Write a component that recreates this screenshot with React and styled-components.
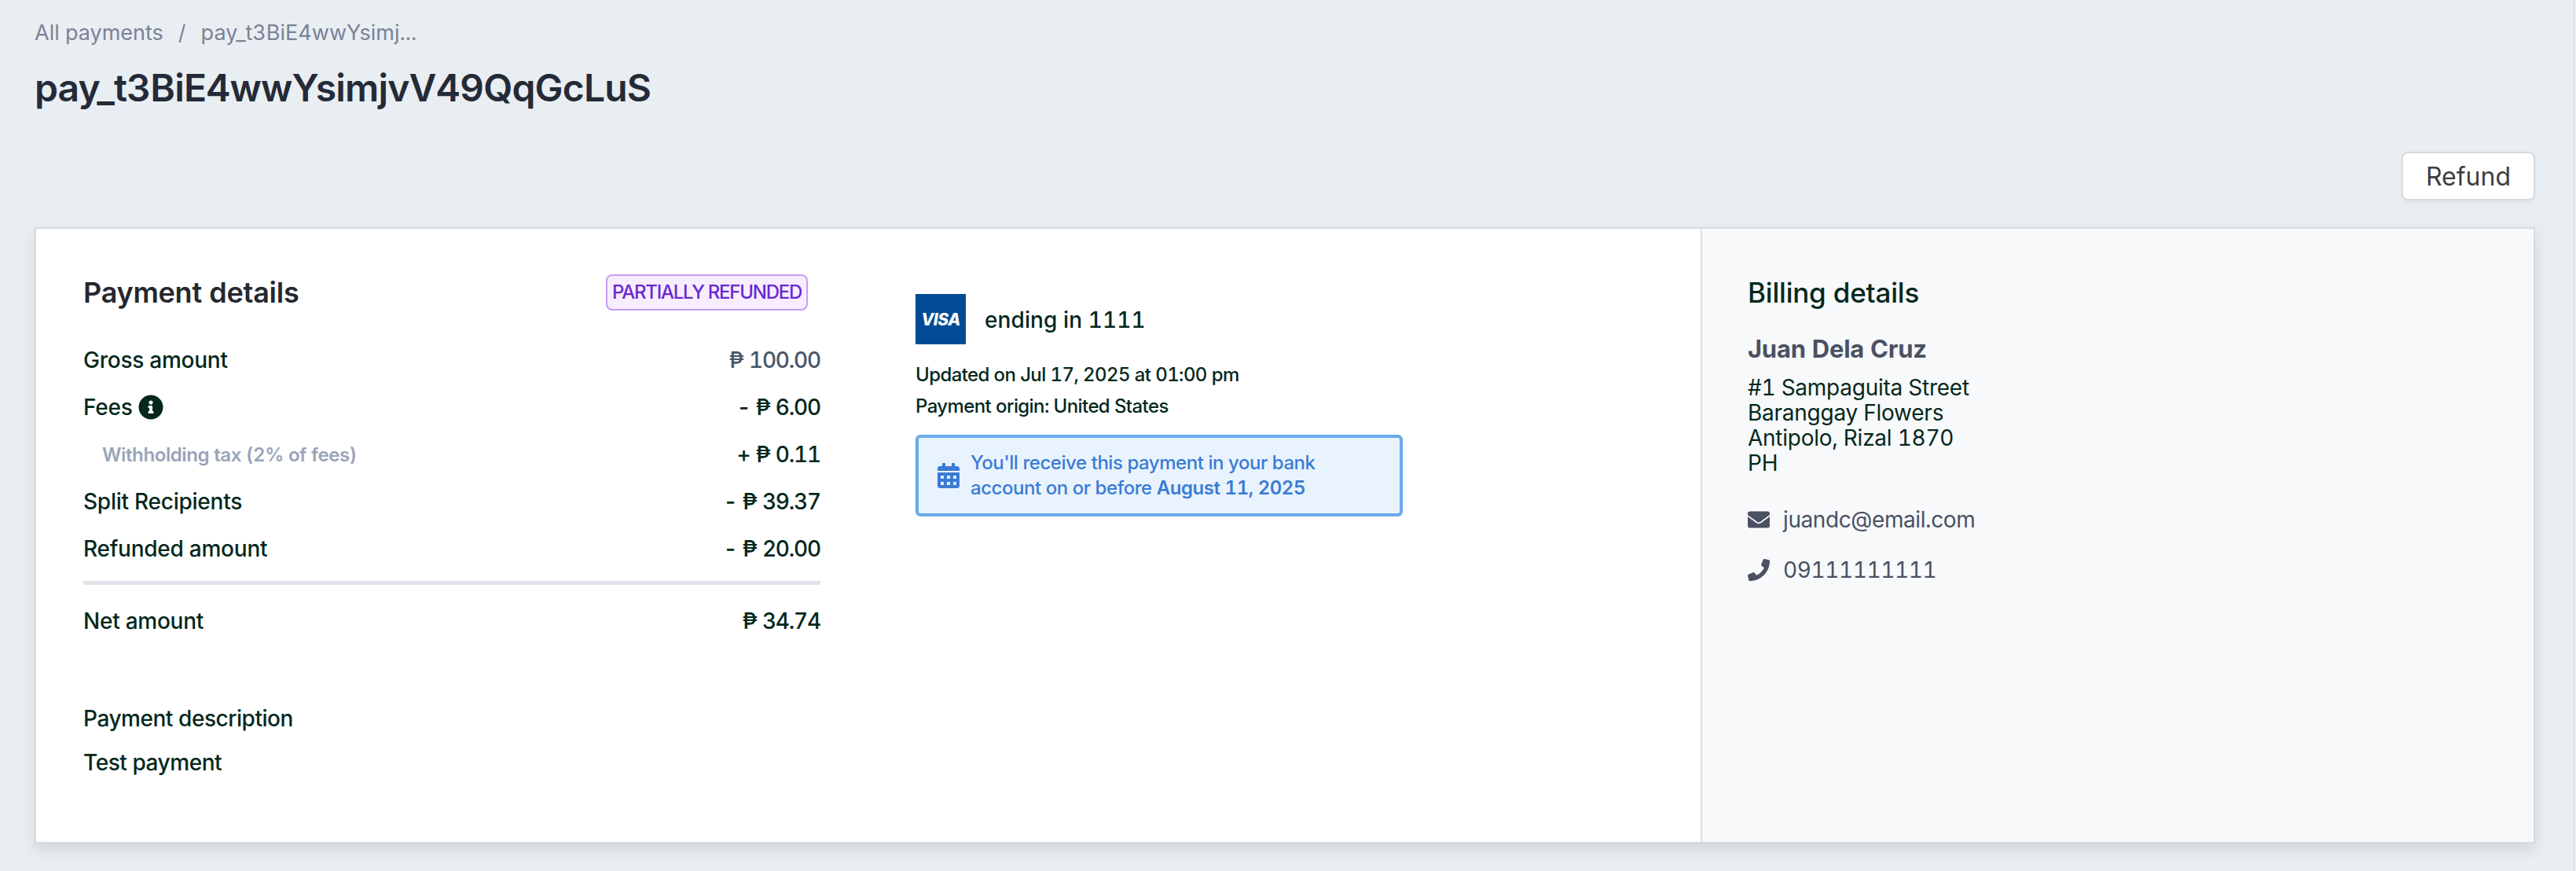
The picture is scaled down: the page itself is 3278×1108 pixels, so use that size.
import React from 'react';
import styled, { createGlobalStyle } from 'styled-components';
import { FaInfoCircle, FaCalendarAlt, FaEnvelope, FaPhone } from 'react-icons/fa';

const Global = createGlobalStyle`
	html, body {
		margin: 0;
		padding: 0;
		background: #e9eef2;
		font-family: Inter, "Noto Sans", sans-serif;
		font-variant-numeric: tabular-nums;
		color: #04281c;
	}
`;

const Page = styled.div`
	box-sizing: border-box;
	width: 3276px;
	height: 1108px;
	padding: 24px 48px 0 44px;
	overflow: hidden;
	border-right: 2px solid #e1e4e8;
`;

const Breadcrumb = styled.div`
	display: flex;
	gap: 19px;
	height: 36px;
	line-height: 36px;
	font-size: 27px;
	color: #7b8296;
`;

const Title = styled.h1`
	margin: 20px 0 0;
	height: 64px;
	line-height: 64px;
	font-size: 48px;
	font-weight: 600;
	letter-spacing: -0.8px;
	color: #252a37;
`;

const Actions = styled.div`
	display: flex;
	justify-content: flex-end;
	margin-top: 49px;
`;

const RefundButton = styled.button`
	box-sizing: border-box;
	width: 170px;
	height: 62px;
	background: #fff;
	border: 2px solid #d9dbdd;
	border-radius: 8px;
	box-shadow: 0 2px 6px rgba(0, 0, 0, 0.05);
	font-family: inherit;
	font-size: 32px;
	color: #3d3d3f;
`;

const Card = styled.div`
	box-sizing: border-box;
	display: flex;
	height: 784px;
	margin-top: 34px;
	border: 2px solid #d8dadc;
	background: #fff;
	box-shadow: 0 8px 16px rgba(40, 50, 60, 0.12);
`;

const MainPanel = styled.div`
	display: flex;
	flex: 0 0 2118px;
	box-sizing: border-box;
	padding: 58px 60px 0;
	gap: 121px;
`;

const SummaryColumn = styled.div`
	width: 938px;
`;

const SummaryHeader = styled.div`
	display: flex;
	align-items: center;
	justify-content: space-between;
	height: 46px;
	padding-right: 16px;
	margin-bottom: 33px;
`;

const SectionTitle = styled.h2`
	margin: 0;
	font-size: 36px;
	line-height: 46px;
	font-weight: 600;
	letter-spacing: -0.25px;
	color: #25282f;
`;

const StatusBadge = styled.span`
	box-sizing: border-box;
	height: 46px;
	line-height: 42px;
	padding: 0 6px;
	background: #f7edfe;
	border: 2px solid #c99cf2;
	border-radius: 8px;
	font-size: 24px;
	font-weight: 500;
	letter-spacing: -1.25px;
	color: #6a28d0;
`;

const Row = styled.div`
	display: flex;
	align-items: center;
	justify-content: space-between;
	height: 60px;
	font-size: 28px;
	font-weight: 500;
	letter-spacing: -0.25px;
`;

const RowLabel = styled.span`
	display: flex;
	align-items: center;
	gap: 8px;
	padding-left: ${(p) => (p.$sub ? '24px' : '0')};
	font-size: ${(p) => (p.$sub ? '24px' : '28px')};
	font-weight: ${(p) => (p.$sub ? 600 : 500)};
	letter-spacing: ${(p) => (p.$sub ? '-0.4px' : '-0.25px')};
	color: ${(p) => (p.$sub ? '#9aa3b8' : '#04281c')};
	svg {
		color: #04281c;
	}
`;

const RowValue = styled.span`
	letter-spacing: -1.2px;
	word-spacing: 1px;
	color: ${(p) => (p.$muted ? '#4a5568' : '#04281c')};
`;

const Rule = styled.div`
	height: 5px;
	margin: 11px 0 16px;
	background: #dfe2e8;
`;

const Description = styled.div`
	margin-top: 66px;
	font-size: 28px;
	font-weight: 500;
	letter-spacing: -0.45px;
	line-height: 56px;
`;

const MethodColumn = styled.div`
	width: 620px;
	padding-top: 25px;
`;

const CardRow = styled.div`
	display: flex;
	align-items: center;
	gap: 24px;
	height: 64px;
	font-size: 28px;
	font-weight: 500;
	letter-spacing: 0.1px;
`;

const CardLabel = styled.span`
	padding-top: 2px;
`;

const VisaLogo = styled.span`
	display: flex;
	align-items: center;
	justify-content: center;
	width: 64px;
	height: 64px;
	background: #004b93;
	color: #fff;
	font-size: 21px;
	font-weight: 800;
	font-style: italic;
	letter-spacing: -0.5px;
`;

const MetaList = styled.div`
	margin-top: 19px;
	font-size: 24px;
	font-weight: 500;
	line-height: 40px;
	letter-spacing: -0.6px;
`;

const PayoutNotice = styled.div`
	box-sizing: border-box;
	display: flex;
	align-items: center;
	gap: 12px;
	height: 104px;
	margin-top: 16px;
	padding: 0 22px;
	background: #e9f3fd;
	border: 4px solid #6aaaea;
	border-radius: 6px;
	font-size: 24px;
	font-weight: 500;
	line-height: 32px;
	letter-spacing: -0.45px;
	color: #3a7bd5;
	strong {
		font-weight: 600;
	}
`;

const BillingPanel = styled.div`
	flex: 1;
	padding: 58px 60px 0 58px;
	background: #f8f9fb;
	border-left: 2px solid #dfe1ec;
`;

const BillingTitle = styled.h2`
	margin: 0;
	font-size: 35px;
	line-height: 46px;
	font-weight: 500;
	letter-spacing: -0.2px;
`;

const CustomerName = styled.div`
	margin-top: 29px;
	font-size: 31px;
	line-height: 40px;
	font-weight: 700;
	letter-spacing: -0.25px;
	color: #4a5162;
`;

const Address = styled.address`
	margin-top: 13px;
	font-style: normal;
	font-size: 28px;
	line-height: 32px;
	font-weight: 400;
	letter-spacing: -0.25px;
`;

const ContactRow = styled.div`
	display: flex;
	align-items: center;
	gap: 17px;
	height: 64px;
	font-size: 28px;
	letter-spacing: -0.4px;
	color: #4a5162;
`;

const ContactList = styled.div`
	margin-top: 24px;
`;

export default function App() {
	return (
		<Page>
			<Global />
			<Breadcrumb>
				<span>All payments</span>
				<span>/</span>
				<span>pay_t3BiE4wwYsimj...</span>
			</Breadcrumb>
			<Title>pay_t3BiE4wwYsimjvV49QqGcLuS</Title>
			<Actions>
				<RefundButton>Refund</RefundButton>
			</Actions>
			<Card>
				<MainPanel>
					<SummaryColumn>
						<SummaryHeader>
							<SectionTitle>Payment details</SectionTitle>
							<StatusBadge>PARTIALLY REFUNDED</StatusBadge>
						</SummaryHeader>
						<Row>
							<RowLabel>Gross amount</RowLabel>
							<RowValue $muted>₱ 100.00</RowValue>
						</Row>
						<Row>
							<RowLabel>
								Fees <FaInfoCircle size={32} />
							</RowLabel>
							<RowValue>- ₱ 6.00</RowValue>
						</Row>
						<Row>
							<RowLabel $sub>Withholding tax (2% of fees)</RowLabel>
							<RowValue>+ ₱ 0.11</RowValue>
						</Row>
						<Row>
							<RowLabel>Split Recipients</RowLabel>
							<RowValue>- ₱ 39.37</RowValue>
						</Row>
						<Row>
							<RowLabel>Refunded amount</RowLabel>
							<RowValue>- ₱ 20.00</RowValue>
						</Row>
						<Rule />
						<Row>
							<RowLabel>Net amount</RowLabel>
							<RowValue>₱ 34.74</RowValue>
						</Row>
						<Description>
							<div>Payment description</div>
							<div>Test payment</div>
						</Description>
					</SummaryColumn>
					<MethodColumn>
						<CardRow>
							<VisaLogo>VISA</VisaLogo>
							<CardLabel>ending in 1111</CardLabel>
						</CardRow>
						<MetaList>
							<div>Updated on Jul 17, 2025 at 01:00 pm</div>
							<div>Payment origin: United States</div>
						</MetaList>
						<PayoutNotice>
							<FaCalendarAlt size={32} />
							<span>
								You'll receive this payment in your bank
								<br />
								account on or before <strong>August 11, 2025</strong>
							</span>
						</PayoutNotice>
					</MethodColumn>
				</MainPanel>
				<BillingPanel>
					<BillingTitle>Billing details</BillingTitle>
					<CustomerName>Juan Dela Cruz</CustomerName>
					<Address>
						#1 Sampaguita Street
						<br />
						Baranggay Flowers
						<br />
						Antipolo, Rizal 1870
						<br />
						PH
					</Address>
					<ContactList>
						<ContactRow>
							<FaEnvelope size={28} />
							<span>juandc@email.com</span>
						</ContactRow>
						<ContactRow>
							<FaPhone size={28} />
							<span>09111111111</span>
						</ContactRow>
					</ContactList>
				</BillingPanel>
			</Card>
		</Page>
	);
}
